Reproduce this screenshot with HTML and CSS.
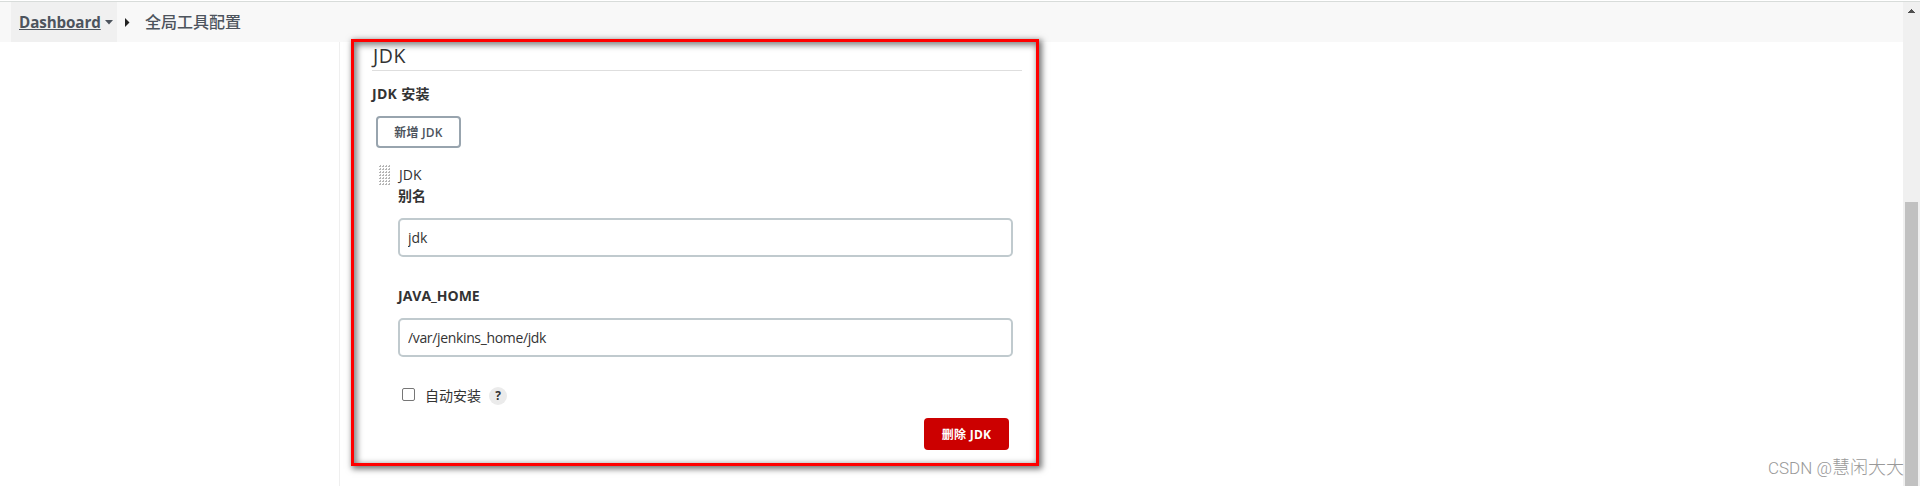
FILE: index.html
```html
<!DOCTYPE html>
<html lang="zh-CN">
<head>
<meta charset="utf-8">
<title>全局工具配置</title>
<link rel="stylesheet" href="styles.css">
</head>
<body>
<div class="page">
  <div class="content">
    <nav class="breadcrumbs">
      <a class="crumb-link"><span class="crumb-text">Dashboard</span><svg class="caret" width="8" height="5" viewBox="0 0 8 5"><path d="M0 0h8L4 4.5z"/></svg></a>
      <svg class="separator" width="5" height="9" viewBox="0 0 5 9"><path d="M0 0l4.5 4.5L0 9z"/></svg>
      <span class="crumb-title">全局工具配置</span>
    </nav>
    <main class="main-panel">
      <h2 class="section-title">JDK</h2>
      <div class="label install-label">JDK 安装</div>
      <button class="button add">新增 JDK</button>
      <div class="item">
        <svg class="grip" width="12" height="20" viewBox="0 0 12 20">
          <defs><pattern id="dots" width="3" height="3" patternUnits="userSpaceOnUse"><path d="M0 1h2v1H0zM1 0h1v1H1z" fill="#b5b5b5"/></pattern></defs>
          <rect width="12" height="20" fill="url(#dots)"/>
        </svg>
        <div class="fields">
          <div class="kind">JDK</div>
          <label class="label">别名</label>
          <input class="input name-input" value="jdk">
          <label class="label home-label">JAVA_HOME</label>
          <input class="input" value="/var/jenkins_home/jdk">
          <div class="auto-row">
            <span class="checkbox"></span><span class="auto-text">自动安装</span><span class="help">?</span>
          </div>
          <button class="button remove">删除 JDK</button>
        </div>
      </div>
    </main>
  </div>
  <div class="scrollbar">
    <svg class="up" width="7" height="4" viewBox="0 0 7 4"><path d="M3 0h1v1h1v1h1v1h1v1H0V3h1V2h1V1h1z"/></svg>
    <div class="thumb"></div>
  </div>
  <div class="highlight"></div>
  <div class="watermark"><span class="watermark-site">CSDN @</span>慧闲大大</div>
</div>
</body>
</html>
```
FILE: styles.css
```css
* { box-sizing: border-box; }
body {
  margin: 0;
  background: #fff;
  color: #333;
  font-family: "Open Sans", "Noto Sans CJK SC", sans-serif;
  font-size: 14px;
}
.page {
  position: relative;
  display: flex;
  height: 486px;
  padding-top: 1px;
  overflow: hidden;
}
.page::before {
  content: "";
  position: absolute;
  top: 1px;
  left: 0;
  width: 100%;
  height: 1px;
  background: #d8dcda;
}
.content { flex: 1; }
.breadcrumbs {
  display: flex;
  align-items: center;
  height: 41px;
  padding: 1px 0 0 11px;
  background: #f8f8f8;
  color: #4d545d;
  font-size: 16px;
}
.crumb-link {
  display: flex;
  align-items: center;
  width: 106px;
  height: 40px;
  padding-left: 8px;
  background: #f0f0f0;
}
.crumb-text {
  width: 82px;
  font-size: 15.2px;
  font-weight: 700;
  line-height: 22px;
  letter-spacing: -0.1px;
  white-space: nowrap;
  text-decoration: underline;
}
.caret { margin-left: 4px; fill: #4d545d; }
.separator { margin-left: 8px; fill: #222; }
.crumb-title { margin-left: 15px; font-weight: 500; line-height: 24px; }
.main-panel {
  height: 444px;
  margin-left: 339px;
  padding: 0 881px 0 32px;
  border-left: 1px solid #efefef;
}
.section-title {
  height: 29px;
  margin: 0;
  border-bottom: 1px solid #dedede;
  font-size: 19.5px;
  font-weight: 500;
  line-height: 28px;
  letter-spacing: 0.5px;
  text-indent: 1px;
}
.label {
  display: block;
  height: 20px;
  font-size: 14px;
  font-weight: 700;
  line-height: 20px;
}
.install-label { margin-top: 13px; letter-spacing: 0.3px; }
.button {
  display: block;
  width: 85px;
  height: 32px;
  padding: 0;
  border: 0;
  border-radius: 4px;
  font-family: inherit;
  font-size: 12px;
  font-weight: 700;
  line-height: 28px;
  text-align: center;
}
.add {
  margin: 12px 0 0 4px;
  padding-top: 1px;
  border: 2px solid #98a4ae;
  background: #fff;
  color: #4d545d;
  font-weight: 600;
  letter-spacing: 0.2px;
}
.item { display: flex; margin-top: 17px; }
.grip { flex: none; margin-left: 7px; }
.fields { flex: 1; padding: 0 9px 0 7px; }
.kind { height: 21px; line-height: 20px; text-indent: 1px; }
.input {
  display: block;
  width: 100%;
  height: 39px;
  padding: 0 8px;
  border: 2px solid #c0cace;
  border-radius: 5px;
  background: #fff;
  color: #333;
  font-family: inherit;
  font-size: 14px;
  letter-spacing: -0.35px;
}
.name-input { margin-top: 12px; letter-spacing: 0; }
.home-label { height: 61px; padding-top: 29px; }
.auto-row {
  display: flex;
  align-items: center;
  height: 20px;
  margin-top: 29px;
  padding-left: 4px;
}
.checkbox {
  width: 13px;
  height: 13px;
  margin-top: -3px;
  border: 1px solid #767676;
  border-radius: 2px;
}
.auto-text { margin-left: 10px; line-height: 20px; }
.help {
  width: 18px;
  height: 18px;
  margin-left: 8px;
  border-radius: 50%;
  background: #ebebeb;
  font-size: 12px;
  font-weight: 700;
  line-height: 18px;
  text-align: center;
}
.remove {
  margin: 12px 4px 0 auto;
  padding-top: 1px;
  background: #c00;
  color: #fff;
  line-height: 31px;
  letter-spacing: 0.3px;
}
.scrollbar {
  display: flex;
  flex-direction: column;
  width: 17px;
  height: 485px;
  padding: 8px 2px 0;
  background: #f0f0f0;
}
.up { flex: none; margin-left: 3px; fill: #505050; }
.thumb { flex: 1; margin-top: 189px; background: #c1c1c1; }
.highlight {
  position: absolute;
  top: 39px;
  left: 351px;
  width: 688px;
  height: 427px;
  border: 3px solid #f00;
  box-shadow: 2px 2px 6px 1px rgba(0, 0, 0, .55), inset 2px 2px 6px 1px rgba(0, 0, 0, .5);
}
.watermark {
  position: absolute;
  top: 455px;
  left: 1768px;
  color: #999;
  font-family: Roboto, "Noto Sans CJK SC", sans-serif;
  font-size: 18px;
  font-weight: 300;
  line-height: 26px;
  white-space: nowrap;
}
.watermark-site { font-size: 17px; }
```
